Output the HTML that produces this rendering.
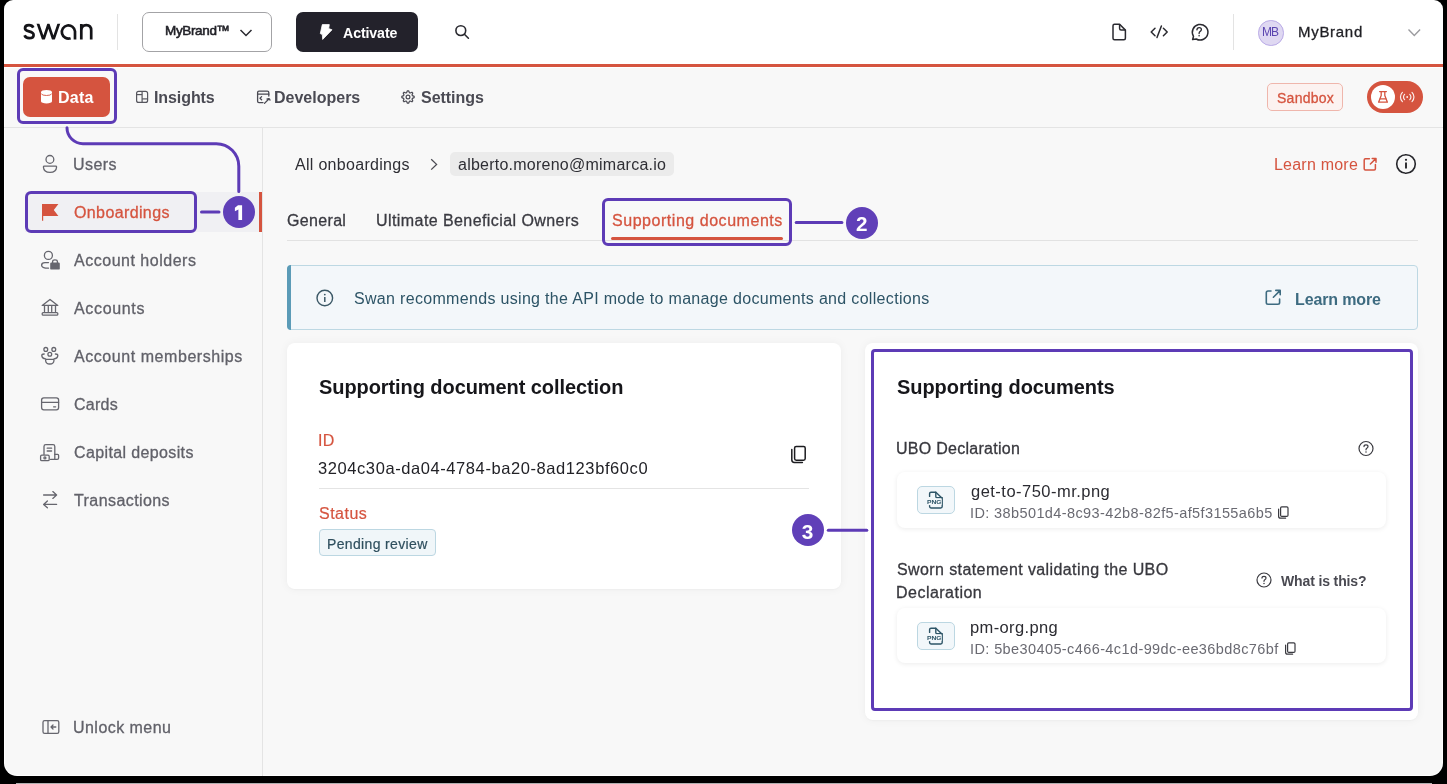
<!DOCTYPE html>
<html><head><meta charset="utf-8"><title>Swan</title>
<style>
html,body{margin:0;padding:0;width:1447px;height:784px;overflow:hidden;background:#000;}
body{font-family:"Liberation Sans",sans-serif;}
#app{position:absolute;left:0;top:0;width:1447px;height:784px;background:#fff;clip-path:inset(0 4px 8px 4px round 9px 9px 13px 13px);overflow:hidden;}
.a{position:absolute;box-sizing:border-box;}
.t{position:absolute;white-space:nowrap;will-change:transform;}
svg.a{overflow:visible;will-change:transform;}
.pb{position:absolute;box-sizing:border-box;border:3px solid #5d3bb6;border-radius:6px;}
.num{position:absolute;width:32px;height:32px;border-radius:50%;background:#5e3fb7;}

</style></head><body>
<div id="app">
<!-- header -->
<div class="a" style="left:5px;top:68px;width:1437px;height:707px;background:#f8f8f8;border-radius:0 0 12px 12px"></div>
<div class="a" style="left:0;top:64px;width:1447px;height:3px;background:#d5543f"></div>
<div class="a" style="left:0;top:127px;width:1447px;height:1px;background:#e4e4e4"></div>
<div class="a" style="left:262px;top:128px;width:1px;height:660px;background:#e4e4e4"></div>
<svg class="a" style="left:0;top:0" width="1447" height="784" viewBox="0 0 1447 784" fill="none">
 <!-- logo -->
 <g stroke="#141418" stroke-width="2.7" fill="none">
  <path d="M33.3,27.6 C32.6,26 31,25.2 29,25.2 C26.6,25.2 25,26.4 25,28.2 C25,30.2 26.8,30.9 29,31.4 C31.5,32 33.6,32.7 33.6,34.9 C33.6,37 31.6,38.2 29.2,38.2 C26.8,38.2 25.2,37.1 24.6,35.3"/>
  <clipPath id="wc"><rect x="30" y="23.8" width="40" height="15.8"/></clipPath><path clip-path="url(#wc)" d="M37.6,22.6 L43.4,39.6 L48.4,24.6 L53.4,39.6 L59.2,22.6" stroke-linejoin="miter" stroke-miterlimit="10"/>
  <path d="M70.6,38.2 A6.6,6.6 0 1 1 75,31.4 L75,39.6"/>
  <path d="M81.3,39.6 L81.3,24 M81.3,30.6 C81.3,27 83.5,25.2 86.3,25.2 C89.2,25.2 91.2,27 91.2,30.6 L91.2,39.6"/>
 </g>
 <!-- separators -->
 <line x1="117.5" y1="14" x2="117.5" y2="50" stroke="#e3e3e3" stroke-width="1"/>
 <line x1="1233.5" y1="14" x2="1233.5" y2="50" stroke="#e3e3e3" stroke-width="1"/>
 <!-- mybrand chevron -->
 <polyline points="240.5,30 246,35.5 251.5,30" stroke="#2a2a30" stroke-width="1.5"/>
 <!-- search -->
 <circle cx="460.8" cy="30.6" r="4.9" stroke="#2a2a30" stroke-width="1.6"/>
 <line x1="464.4" y1="34.2" x2="468.4" y2="38.2" stroke="#2a2a30" stroke-width="1.6" stroke-linecap="round"/>
 <!-- doc -->
 <g stroke="#2a2a30" stroke-width="1.5" stroke-linejoin="round">
  <path d="M1113,25.8 Q1113,24.3 1114.5,24.3 L1119.6,24.3 L1125.4,30.1 L1125.4,38.3 Q1125.4,39.8 1123.9,39.8 L1114.5,39.8 Q1113,39.8 1113,38.3 Z"/>
  <path d="M1119.6,24.3 L1119.6,28.6 Q1119.6,30.1 1121.1,30.1 L1125.4,30.1"/>
 </g>
 <!-- code -->
 <g stroke="#2a2a30" stroke-width="1.5" stroke-linecap="round" stroke-linejoin="round">
  <polyline points="1155,28.2 1151.2,32 1155,35.8"/>
  <polyline points="1163.4,28.2 1167.2,32 1163.4,35.8"/>
  <line x1="1161.4" y1="26" x2="1157" y2="37.6"/>
 </g>
 <!-- help bubble -->
 <path d="M1192.6,39.6 L1193.5,36.3 A7.8,7.8 0 1 1 1196.3,39 Z" stroke="#2a2a30" stroke-width="1.5" stroke-linejoin="round"/>
 <path d="M1196.9,29.9 Q1197,27.6 1199.2,27.6 Q1201.4,27.6 1201.4,29.6 Q1201.4,31 1199.9,31.7 Q1199.1,32.1 1199.1,33.5" stroke="#2a2a30" stroke-width="1.3" stroke-linecap="round"/>
 <circle cx="1199.1" cy="35.7" r="0.8" fill="#2a2a30"/>
 <!-- gray chevron -->
 <polyline points="1408.5,29.6 1414.3,35.4 1420.1,29.6" stroke="#9b9b9f" stroke-width="1.4"/>

 <!-- database icon -->
 <path d="M41,92.2 A5.5,2.3 0 0 1 52,92.2 L52,101.2 A5.5,2.3 0 0 1 41,101.2 Z" fill="#fff"/>
 <path d="M41.3,93.6 A5.3,2.1 0 0 0 51.7,93.6" stroke="#d5543f" stroke-width="0.9"/>
 <!-- insights -->
 <g stroke="#56565e" stroke-width="1.2">
  <rect x="136.6" y="91.4" width="11" height="11" rx="2"/>
  <line x1="142.1" y1="91.4" x2="142.1" y2="102.4"/>
  <line x1="136.6" y1="94.6" x2="142.1" y2="94.6"/>
  <line x1="142.1" y1="98.9" x2="147.6" y2="98.9"/>
 </g>
 <!-- developers -->
 <g stroke="#4a4a53" stroke-width="1.3" stroke-linecap="round" stroke-linejoin="round">
  <path d="M263,102.6 L259,102.6 Q257.6,102.6 257.6,101.2 L257.6,92.6 Q257.6,91.2 259,91.2 L267.4,91.2 Q268.8,91.2 268.8,92.6 L268.8,96"/>
  <line x1="257.6" y1="94.2" x2="268.8" y2="94.2"/>
  <polyline points="261.6,96.6 260,98.2 261.6,99.8"/>
  <path d="M264.5,103.4 L268.6,99.3 M267,99 Q269.5,97.8 270,100.2"/>
 </g>
 <!-- gear -->
 <path d="M407.39,90.83 L408.61,90.83 L409.34,92.60 L410.17,92.94 L411.93,92.21 L412.79,93.07 L412.06,94.83 L412.40,95.66 L414.17,96.39 L414.17,97.61 L412.40,98.34 L412.06,99.17 L412.79,100.93 L411.93,101.79 L410.17,101.06 L409.34,101.40 L408.61,103.17 L407.39,103.17 L406.66,101.40 L405.83,101.06 L404.07,101.79 L403.21,100.93 L403.94,99.17 L403.60,98.34 L401.83,97.61 L401.83,96.39 L403.60,95.66 L403.94,94.83 L403.21,93.07 L404.07,92.21 L405.83,92.94 L406.66,92.60 Z" stroke="#4a4a53" stroke-width="1.2" stroke-linejoin="round"/>
 <circle cx="408" cy="97" r="1.9" stroke="#4a4a53" stroke-width="1.2"/>
</svg>

<!-- mybrand box -->
<div class="a" style="left:142px;top:12px;width:130px;height:40px;border:1px solid #a3a3a6;border-radius:7px"></div>
<!-- activate -->
<div class="a" style="left:296px;top:12px;width:122px;height:40px;background:#23222b;border-radius:7px"></div>
<svg class="a" style="left:0;top:0" width="500" height="60" viewBox="0 0 500 60">
 <path d="M322.3,24.6 L329.3,24.6 L328.7,28.6 L332,29.8 L322.7,39.4 L322.3,34.6 L320.3,33.6 Z" fill="#fff" stroke="#fff" stroke-width="0.8" stroke-linejoin="round"/>
</svg>
<!-- avatar -->
<div class="a" style="left:1258px;top:20px;width:25.5px;height:25.5px;border-radius:50%;background:#dfd8f2;border:1px solid #b9aae6"></div>

<!-- data button -->
<div class="a" style="left:23px;top:77px;width:87px;height:40px;background:#d5543f;border-radius:7px"></div>
<svg class="a" style="left:0;top:0" width="60" height="120" viewBox="0 0 60 120" fill="none">
 <path d="M41,92.2 A5.5,2.3 0 0 1 52,92.2 L52,101.2 A5.5,2.3 0 0 1 41,101.2 Z" fill="#fff"/>
 <path d="M41.3,93.8 A5.3,2.1 0 0 0 51.7,93.8" stroke="#d5543f" stroke-width="0.9"/>
</svg>

<!-- sandbox + toggle -->
<div class="a" style="left:1267px;top:83px;width:76px;height:28px;border:1px solid #efb6ac;background:#fcf2f0;border-radius:5px"></div>
<div class="a" style="left:1367px;top:81px;width:56px;height:32px;background:#d5543f;border-radius:16px"></div>
<div class="a" style="left:1371px;top:85px;width:24px;height:24px;background:#fff;border-radius:50%"></div>
<svg class="a" style="left:0;top:0" width="1447" height="130" viewBox="0 0 1447 130" fill="none">
 <g stroke="#d5543f" stroke-width="1.3" stroke-linejoin="round" stroke-linecap="round">
  <line x1="1379.6" y1="91.6" x2="1386.4" y2="91.6"/>
  <path d="M1381.2,91.6 L1381.2,95.4 L1378.6,102.2 L1387.4,102.2 L1384.8,95.4 L1384.8,91.6"/>
  <line x1="1380.2" y1="98.8" x2="1385.8" y2="98.8"/>
 </g>
 <g stroke="#fff" stroke-width="1.2" stroke-linecap="round" opacity="0.9">
  <circle cx="1407.2" cy="97" r="0.9" fill="#fff" stroke="none"/>
  <path d="M1404.6,94.4 A3.6,3.6 0 0 0 1404.6,99.6 M1409.8,94.4 A3.6,3.6 0 0 1 1409.8,99.6"/>
  <path d="M1402.4,92.4 A6.4,6.4 0 0 0 1402.4,101.6 M1412,92.4 A6.4,6.4 0 0 1 1412,101.6"/>
 </g>
</svg>

<!-- sidebar active row -->
<div class="a" style="left:25px;top:192px;width:237px;height:40px;background:#f0f0f3"></div>
<div class="a" style="left:259px;top:192px;width:3px;height:40px;background:#d5543f"></div>
<svg class="a" style="left:0;top:0" width="270" height="784" viewBox="0 0 270 784" fill="none">
 <g stroke="#66666e" stroke-width="1.3" stroke-linecap="round" stroke-linejoin="round">
  <!-- user -->
  <circle cx="49.9" cy="159.4" r="3.9"/>
  <path d="M43.4,167 Q43.4,166.2 44.4,166.2 L55.6,166.2 Q56.6,166.2 56.6,167 Q56.2,172.4 50,172.4 Q43.8,172.4 43.4,167 Z"/>
  <!-- account holders -->
  <circle cx="48.4" cy="255.4" r="4"/>
  <path d="M48.5,262.6 L45,262.6 Q41.6,262.6 41.6,265.2 Q41.6,268.2 48.5,268.2"/>
  <!-- bank -->
  <path d="M42.2,305.4 L50,299.4 L57.8,305.4 Z"/>
  <line x1="44.5" y1="306.5" x2="44.5" y2="311.5"/><line x1="48.3" y1="306.5" x2="48.3" y2="311.5"/><line x1="51.7" y1="306.5" x2="51.7" y2="311.5"/><line x1="55.5" y1="306.5" x2="55.5" y2="311.5"/>
  <rect x="42.2" y="312.6" width="15.6" height="2.6" rx="1"/>
  <!-- memberships -->
  <circle cx="45.8" cy="349.4" r="1.9"/><circle cx="53.8" cy="349.4" r="1.9"/><circle cx="49.8" cy="354.2" r="1.9"/>
  <path d="M44.2,354 Q41.8,354 41.8,355.6 Q42,358.6 45.6,358.8 M55.4,354 Q57.8,354 57.8,355.6 Q57.6,358.6 54,358.8"/>
  <path d="M45.6,360.2 Q45.6,359.4 46.4,359.4 L53.2,359.4 Q54,359.4 54,360.2 Q53.8,364 49.8,364 Q45.8,364 45.6,360.2 Z"/>
  <!-- card -->
  <rect x="41.6" y="397.8" width="17" height="12" rx="2.2"/>
  <line x1="41.6" y1="402.4" x2="58.6" y2="402.4"/>
  <line x1="53.6" y1="406.8" x2="55.6" y2="406.8"/>
  <!-- capital deposits -->
  <path d="M44,454.4 L44,446.4 Q44,444.6 45.8,444.6 L53,444.6 Q54.8,444.6 54.8,446.4 L54.8,459.4 L50.6,459.4"/>
  <path d="M54.8,454.4 L57.6,454.4 Q58.6,454.4 58.6,455.6 L58.6,458 Q58.6,459.4 57.2,459.4 L54.8,459.4"/>
  <line x1="47.2" y1="448.2" x2="51.6" y2="448.2"/><line x1="47.2" y1="451" x2="51.6" y2="451"/>
  <rect x="40.6" y="455.2" width="8.6" height="5.4" rx="1.2"/>
  <circle cx="44.9" cy="457.9" r="1"/>
  <!-- transactions -->
  <path d="M43.6,495 L56.6,495 M52.8,491.6 L56.6,495 L52.8,498.4"/>
  <path d="M56.6,504.4 L43.6,504.4 M47.4,501 L43.6,504.4 L47.4,507.8"/>
  <!-- unlock menu -->
  <rect x="43" y="720.6" width="15.8" height="12.8" rx="1.6"/>
  <line x1="48" y1="720.6" x2="48" y2="733.4"/>
  <path d="M55.8,727 L51,727 M53,725 L51,727 L53,729"/>
 </g>
 <!-- lock fill -->
 <rect x="50.2" y="262.6" width="9.6" height="7" rx="1.2" fill="#66666e"/>
 <path d="M52.6,263 L52.6,261.6 Q52.6,259.8 55,259.8 Q57.4,259.8 57.4,261.6 L57.4,263" stroke="#66666e" stroke-width="1.3"/>
 <!-- flag -->
 <path d="M42,204 L58.4,204 L53.8,210 L58.4,216 L43.2,216 L43.2,220.8 L42,220.8 Z" fill="#d5543f"/>
 <!-- connector 1 -->
 <path d="M67,127.7 A16,16 0 0 0 83,143.7 L216.3,143.7 A22.5,22.5 0 0 1 238.8,166.2 L238.8,191.5" stroke="#5d3bb6" stroke-width="3" stroke-linecap="round"/>
 <line x1="201.5" y1="212" x2="219" y2="212" stroke="#5d3bb6" stroke-width="3" stroke-linecap="round"/>
</svg>

<div class="pb" style="left:17px;top:68px;width:100px;height:56px"></div>
<div class="pb" style="left:25px;top:191px;width:172px;height:42px"></div>


<!-- main: breadcrumb -->
<div class="a" style="left:450px;top:152px;width:224px;height:24px;background:#ebebeb;border-radius:5px"></div>
<svg class="a" style="left:0;top:0" width="1447" height="784" viewBox="0 0 1447 784" fill="none">
 <polyline points="431.2,159.2 436.6,164.4 431.2,169.6" stroke="#4a4a52" stroke-width="1.3"/>
 <g stroke="#d5543f" stroke-width="1.5" stroke-linecap="round" stroke-linejoin="round">
  <path d="M1369.4,158.8 L1365.4,158.8 Q1364.2,158.8 1364.2,160 L1364.2,168.8 Q1364.2,170 1365.4,170 L1374.2,170 Q1375.4,170 1375.4,168.8 L1375.4,164.6"/>
  <path d="M1370.4,164 L1375.8,158.6 M1372.2,158.4 L1376,158.4 L1376,162.2"/>
 </g>
 <circle cx="1406" cy="164" r="9.3" stroke="#26262b" stroke-width="1.6"/>
 <circle cx="1406" cy="159.8" r="1.1" fill="#26262b"/>
 <line x1="1406" y1="162.6" x2="1406" y2="168.6" stroke="#26262b" stroke-width="1.9"/>
</svg>
<!-- tabs -->
<div class="a" style="left:287px;top:240px;width:1131px;height:1px;background:#e2e2e2"></div>
<div class="a" style="left:611px;top:237px;width:172px;height:3px;background:#d5543f;border-radius:1.5px"></div>
<div class="pb" style="left:602px;top:198px;width:190px;height:48px"></div>
<svg class="a" style="left:0;top:0" width="1447" height="784" viewBox="0 0 1447 784" fill="none">
 <line x1="796.2" y1="222.6" x2="841.9" y2="222.6" stroke="#5d3bb6" stroke-width="3" stroke-linecap="round"/>
</svg>


<!-- banner -->
<div class="a" style="left:287px;top:265px;width:1131px;height:65px;background:#f3f7fa;border:1px solid #bdd8e3;border-radius:4px"></div>
<div class="a" style="left:287px;top:265px;width:3.5px;height:65px;background:#5b9bb7;border-radius:4px 0 0 4px"></div>
<svg class="a" style="left:0;top:0" width="1447" height="784" viewBox="0 0 1447 784" fill="none">
 <circle cx="324.8" cy="298" r="7.8" stroke="#3b5866" stroke-width="1.4"/>
 <circle cx="324.8" cy="294.6" r="0.9" fill="#3b5866"/>
 <line x1="324.8" y1="297" x2="324.8" y2="302" stroke="#3b5866" stroke-width="1.5"/>
 <g stroke="#3d6b80" stroke-width="1.6" stroke-linecap="round" stroke-linejoin="round">
  <path d="M1271,291 L1268,291 Q1266.3,291 1266.3,292.7 L1266.3,302.6 Q1266.3,304.3 1268,304.3 L1277.9,304.3 Q1279.6,304.3 1279.6,302.6 L1279.6,299"/>
  <path d="M1273.4,297.2 L1280,290.6 M1275.8,290.4 L1280.2,290.4 L1280.2,294.8"/>
 </g>
</svg>

<!-- left card -->
<div class="a" style="left:287px;top:343px;width:554px;height:246px;background:#fff;border-radius:8px;box-shadow:0 0 10px rgba(0,0,0,0.05),0 1px 2px rgba(0,0,0,0.03)"></div>
<div class="a" style="left:319px;top:488px;width:490px;height:1px;background:#e4e4e4"></div>
<div class="a" style="left:319px;top:529px;width:117px;height:27px;background:#f0f6f9;border:1px solid #bcd7e2;border-radius:4px"></div>
<svg class="a" style="left:0;top:0" width="1447" height="784" viewBox="0 0 1447 784" fill="none">
 <g stroke="#1c1c20" stroke-width="1.5" stroke-linecap="round">
  <rect x="794.6" y="446.4" width="10.6" height="13.8" rx="1.6"/>
  <path d="M791.8,449.4 L791.8,459.8 Q791.8,462.4 794.4,462.4 L802.4,462.4"/>
 </g>
</svg>

<!-- right card -->
<div class="a" style="left:865px;top:343px;width:553px;height:377px;background:#fff;border-radius:8px;box-shadow:0 0 10px rgba(0,0,0,0.05),0 1px 2px rgba(0,0,0,0.03)"></div>
<div class="pb" style="left:871px;top:349px;width:542px;height:362px;border-radius:4px"></div>
<div class="a" style="left:897px;top:472px;width:489px;height:56px;background:#fff;border-radius:8px;box-shadow:0 1px 5px rgba(0,0,0,0.08)"></div>
<div class="a" style="left:897px;top:608px;width:489px;height:55px;background:#fff;border-radius:8px;box-shadow:0 1px 5px rgba(0,0,0,0.08)"></div>
<div class="a" style="left:917px;top:486px;width:38px;height:28px;background:#f2f7fa;border:1px solid #bcd7e2;border-radius:5px"></div>
<div class="a" style="left:917px;top:622px;width:38px;height:28px;background:#f2f7fa;border:1px solid #bcd7e2;border-radius:5px"></div>
<svg class="a" style="left:0;top:0" width="1447" height="784" viewBox="0 0 1447 784" fill="none">
 <!-- help icons -->
 <g stroke="#3a3a40" stroke-width="1.2" stroke-linecap="round">
  <circle cx="1366" cy="448.5" r="7"/>
  <path d="M1364,446.6 Q1364,444.8 1366,444.8 Q1368,444.8 1368,446.5 Q1368,447.6 1366.8,448.2 Q1366,448.6 1366,449.8"/>
  <circle cx="1264" cy="580" r="7"/>
  <path d="M1262,578.1 Q1262,576.3 1264,576.3 Q1266,576.3 1266,578 Q1266,579.1 1264.8,579.7 Q1264,580.1 1264,581.3"/>
 </g>
 <circle cx="1366" cy="451.9" r="0.75" fill="#3a3a40"/>
 <circle cx="1264" cy="583.4" r="0.75" fill="#3a3a40"/>
 <!-- file icons -->
 <g stroke="#2e5567" stroke-width="1.4" stroke-linejoin="round" stroke-linecap="round">
  <path d="M929.6,496.4 L929.6,493.6 Q929.6,492.2 931,492.2 L935.8,492.2 L942.2,498.2 L942.2,506.6 Q942.2,508 940.8,508 L931,508 Q929.6,508 929.6,506.6 L929.6,505.6"/>
  <path d="M935.8,492.2 L935.8,496.4 Q935.8,497.6 937,497.6 L942.2,497.6"/>
  <path d="M929.6,632.4 L929.6,629.6 Q929.6,628.2 931,628.2 L935.8,628.2 L942.2,634.2 L942.2,642.6 Q942.2,644 940.8,644 L931,644 Q929.6,644 929.6,642.6 L929.6,641.6"/>
  <path d="M935.8,628.2 L935.8,632.4 Q935.8,633.6 937,633.6 L942.2,633.6"/>
 </g>
 <rect x="926.6" y="498.6" width="15" height="6.4" fill="#f2f7fa"/>
 <rect x="926.6" y="634.6" width="15" height="6.4" fill="#f2f7fa"/>
 <text x="927" y="504.4" font-family="Liberation Sans" font-size="6.2" font-weight="700" fill="#2e5567" textLength="14.6" lengthAdjust="spacingAndGlyphs">PNG</text>
 <text x="927" y="640.4" font-family="Liberation Sans" font-size="6.2" font-weight="700" fill="#2e5567" textLength="14.6" lengthAdjust="spacingAndGlyphs">PNG</text>
 <!-- small copy icons -->
 <g stroke="#3a3a40" stroke-width="1.2" stroke-linecap="round">
  <rect x="1280.6" y="506.8" width="7.4" height="9.6" rx="1.2"/>
  <path d="M1278.6,509 L1278.6,516.2 Q1278.6,518.2 1280.6,518.2 L1285.6,518.2"/>
  <rect x="1287.6" y="642.8" width="7.4" height="9.6" rx="1.2"/>
  <path d="M1285.6,645 L1285.6,652.2 Q1285.6,654.2 1287.6,654.2 L1292.6,654.2"/>
 </g>
</svg>

<svg class="a" style="left:0;top:0" width="1447" height="784" viewBox="0 0 1447 784" fill="none">
 <line x1="828.3" y1="530.2" x2="866.8" y2="530.2" stroke="#5d3bb6" stroke-width="3" stroke-linecap="round"/>
</svg>

<svg class="a" style="left:0;top:0" width="1447" height="784" viewBox="0 0 1447 784">
 <circle cx="239" cy="212" r="16" fill="#6040b8"/>
 <circle cx="862" cy="223" r="16" fill="#6040b8"/>
 <circle cx="808" cy="530" r="16" fill="#6040b8"/>
 <path d="M238,205.2 L242.1,205.2 L242.1,220.1 L238.4,220.1 L238.4,209.6 L234.9,211.2 L234.9,207.7 Z" fill="#fff"/>
 <text x="856.1" y="231.1" font-family="Liberation Sans" font-size="20.5" font-weight="700" fill="#fff" textLength="11.5" lengthAdjust="spacingAndGlyphs">2</text>
 <text x="801.8" y="538.5" font-family="Liberation Sans" font-size="20.5" font-weight="700" fill="#fff" textLength="11.6" lengthAdjust="spacingAndGlyphs">3</text>
</svg>

<div class="t" id="t0" style="left:165.00px;top:24.37px;font-size:13.5px;line-height:13.5px;font-weight:400;color:#222228;letter-spacing:-0.343px;-webkit-text-stroke:0.55px #222228;">MyBrand™</div>
<div class="t" id="t1" style="left:343.20px;top:25.78px;font-size:14.2px;line-height:14.2px;font-weight:700;color:#ffffff;letter-spacing:-0.114px;">Activate</div>
<div class="t" id="t2" style="left:1298.40px;top:24.00px;font-size:15px;line-height:15px;font-weight:400;color:#1f1f24;letter-spacing:0.700px;-webkit-text-stroke:0.3px #1f1f24;">MyBrand</div>
<div class="t" id="t3" style="left:1261.80px;top:26.34px;font-size:12px;line-height:12px;font-weight:400;color:#5b45b0;letter-spacing:-1.000px;">MB</div>
<div class="t" id="t4" style="left:58.40px;top:90.16px;font-size:16px;line-height:16px;font-weight:700;color:#ffffff;letter-spacing:0.267px;">Data</div>
<div class="t" id="t5" style="left:153.60px;top:90.26px;font-size:16px;line-height:16px;font-weight:700;color:#4a4a53;letter-spacing:-0.086px;">Insights</div>
<div class="t" id="t6" style="left:274.00px;top:90.26px;font-size:16px;line-height:16px;font-weight:700;color:#4a4a53;letter-spacing:0.000px;">Developers</div>
<div class="t" id="t7" style="left:420.60px;top:90.26px;font-size:16px;line-height:16px;font-weight:700;color:#4a4a53;letter-spacing:-0.029px;">Settings</div>
<div class="t" id="t8" style="left:1276.80px;top:90.75px;font-size:14px;line-height:14px;font-weight:400;color:#d5543f;letter-spacing:0.267px;-webkit-text-stroke:0.3px #d5543f;">Sandbox</div>
<div class="t" id="t9" style="left:72.60px;top:156.96px;font-size:16px;line-height:16px;font-weight:400;color:#616169;letter-spacing:0.450px;-webkit-text-stroke:0.3px #616169;">Users</div>
<div class="t" id="t10" style="left:73.60px;top:204.86px;font-size:16px;line-height:16px;font-weight:400;color:#d5543f;letter-spacing:0.380px;-webkit-text-stroke:0.3px #d5543f;">Onboardings</div>
<div class="t" id="t11" style="left:73.60px;top:253.26px;font-size:16px;line-height:16px;font-weight:400;color:#616169;letter-spacing:0.514px;-webkit-text-stroke:0.3px #616169;">Account holders</div>
<div class="t" id="t12" style="left:73.60px;top:300.96px;font-size:16px;line-height:16px;font-weight:400;color:#616169;letter-spacing:0.657px;-webkit-text-stroke:0.3px #616169;">Accounts</div>
<div class="t" id="t13" style="left:73.60px;top:349.36px;font-size:16px;line-height:16px;font-weight:400;color:#616169;letter-spacing:0.556px;-webkit-text-stroke:0.3px #616169;">Account memberships</div>
<div class="t" id="t14" style="left:73.60px;top:396.86px;font-size:16px;line-height:16px;font-weight:400;color:#616169;letter-spacing:0.250px;-webkit-text-stroke:0.3px #616169;">Cards</div>
<div class="t" id="t15" style="left:73.60px;top:445.06px;font-size:16px;line-height:16px;font-weight:400;color:#616169;letter-spacing:0.373px;-webkit-text-stroke:0.3px #616169;">Capital deposits</div>
<div class="t" id="t16" style="left:73.60px;top:492.86px;font-size:16px;line-height:16px;font-weight:400;color:#616169;letter-spacing:0.418px;-webkit-text-stroke:0.3px #616169;">Transactions</div>
<div class="t" id="t17" style="left:72.60px;top:720.26px;font-size:16px;line-height:16px;font-weight:400;color:#616169;letter-spacing:0.460px;-webkit-text-stroke:0.3px #616169;">Unlock menu</div>
<div class="t" id="t18" style="left:295.10px;top:157.26px;font-size:16px;line-height:16px;font-weight:400;color:#2e2e34;letter-spacing:0.300px;">All onboardings</div>
<div class="t" id="t19" style="left:457.60px;top:157.26px;font-size:16px;line-height:16px;font-weight:400;color:#2e2e34;letter-spacing:0.242px;">alberto.moreno@mimarca.io</div>
<div class="t" id="t20" style="left:1273.80px;top:157.36px;font-size:16px;line-height:16px;font-weight:400;color:#d5543f;letter-spacing:0.222px;">Learn more</div>
<div class="t" id="t21" style="left:287.30px;top:212.96px;font-size:16px;line-height:16px;font-weight:400;color:#3a3a41;letter-spacing:0.333px;-webkit-text-stroke:0.3px #3a3a41;">General</div>
<div class="t" id="t22" style="left:376.20px;top:212.96px;font-size:16px;line-height:16px;font-weight:400;color:#3a3a41;letter-spacing:0.424px;-webkit-text-stroke:0.3px #3a3a41;">Ultimate Beneficial Owners</div>
<div class="t" id="t23" style="left:611.80px;top:212.96px;font-size:16px;line-height:16px;font-weight:400;color:#d5543f;letter-spacing:0.537px;-webkit-text-stroke:0.3px #d5543f;">Supporting documents</div>
<div class="t" id="t24" style="left:354.40px;top:291.46px;font-size:16px;line-height:16px;font-weight:400;color:#2d5466;letter-spacing:0.319px;">Swan recommends using the API mode to manage documents and collections</div>
<div class="t" id="t25" style="left:1295.20px;top:291.56px;font-size:16px;line-height:16px;font-weight:700;color:#3d6b80;letter-spacing:-0.133px;">Learn more</div>
<div class="t" id="t26" style="left:319.30px;top:377.37px;font-size:20px;line-height:20px;font-weight:700;color:#16161a;letter-spacing:-0.076px;">Supporting document collection</div>
<div class="t" id="t27" style="left:318.30px;top:432.86px;font-size:16px;line-height:16px;font-weight:400;color:#d5543f;letter-spacing:0.400px;-webkit-text-stroke:0.2px #d5543f;">ID</div>
<div class="t" id="t28" style="left:318.30px;top:460.03px;font-size:16.5px;line-height:16.5px;font-weight:400;color:#222227;letter-spacing:0.583px;">3204c30a-da04-4784-ba20-8ad123bf60c0</div>
<div class="t" id="t29" style="left:319.30px;top:505.86px;font-size:16px;line-height:16px;font-weight:400;color:#d5543f;letter-spacing:0.480px;-webkit-text-stroke:0.2px #d5543f;">Status</div>
<div class="t" id="t30" style="left:327.00px;top:536.65px;font-size:14px;line-height:14px;font-weight:400;color:#2f4f5e;letter-spacing:0.354px;-webkit-text-stroke:0.2px #2f4f5e;">Pending review</div>
<div class="t" id="t31" style="left:896.60px;top:377.47px;font-size:20px;line-height:20px;font-weight:700;color:#16161a;letter-spacing:-0.063px;">Supporting documents</div>
<div class="t" id="t32" style="left:895.60px;top:440.66px;font-size:16px;line-height:16px;font-weight:400;color:#38383e;letter-spacing:0.271px;-webkit-text-stroke:0.3px #38383e;">UBO Declaration</div>
<div class="t" id="t33" style="left:971.00px;top:482.83px;font-size:16.5px;line-height:16.5px;font-weight:400;color:#2b2b31;letter-spacing:0.475px;">get-to-750-mr.png</div>
<div class="t" id="t34" style="left:970.00px;top:505.73px;font-size:14.5px;line-height:14.5px;font-weight:400;color:#6a6a72;letter-spacing:0.390px;">ID: 38b501d4-8c93-42b8-82f5-af5f3155a6b5</div>
<div class="t" id="t35" style="left:896.60px;top:561.86px;font-size:16px;line-height:16px;font-weight:400;color:#38383e;letter-spacing:0.400px;-webkit-text-stroke:0.3px #38383e;">Sworn statement validating the UBO</div>
<div class="t" id="t36" style="left:895.60px;top:584.76px;font-size:16px;line-height:16px;font-weight:400;color:#38383e;letter-spacing:0.480px;-webkit-text-stroke:0.3px #38383e;">Declaration</div>
<div class="t" id="t37" style="left:1281.40px;top:574.15px;font-size:14px;line-height:14px;font-weight:700;color:#4a4a52;letter-spacing:-0.133px;">What is this?</div>
<div class="t" id="t38" style="left:970.00px;top:618.63px;font-size:16.5px;line-height:16.5px;font-weight:400;color:#2b2b31;letter-spacing:0.378px;">pm-org.png</div>
<div class="t" id="t39" style="left:970.00px;top:641.93px;font-size:14.5px;line-height:14.5px;font-weight:400;color:#6a6a72;letter-spacing:0.400px;">ID: 5be30405-c466-4c1d-99dc-ee36bd8c76bf</div>
</div>
<div style="position:absolute;left:16px;top:783px;width:1416px;height:1px;background:#b0b0b0"></div>
</body></html>
